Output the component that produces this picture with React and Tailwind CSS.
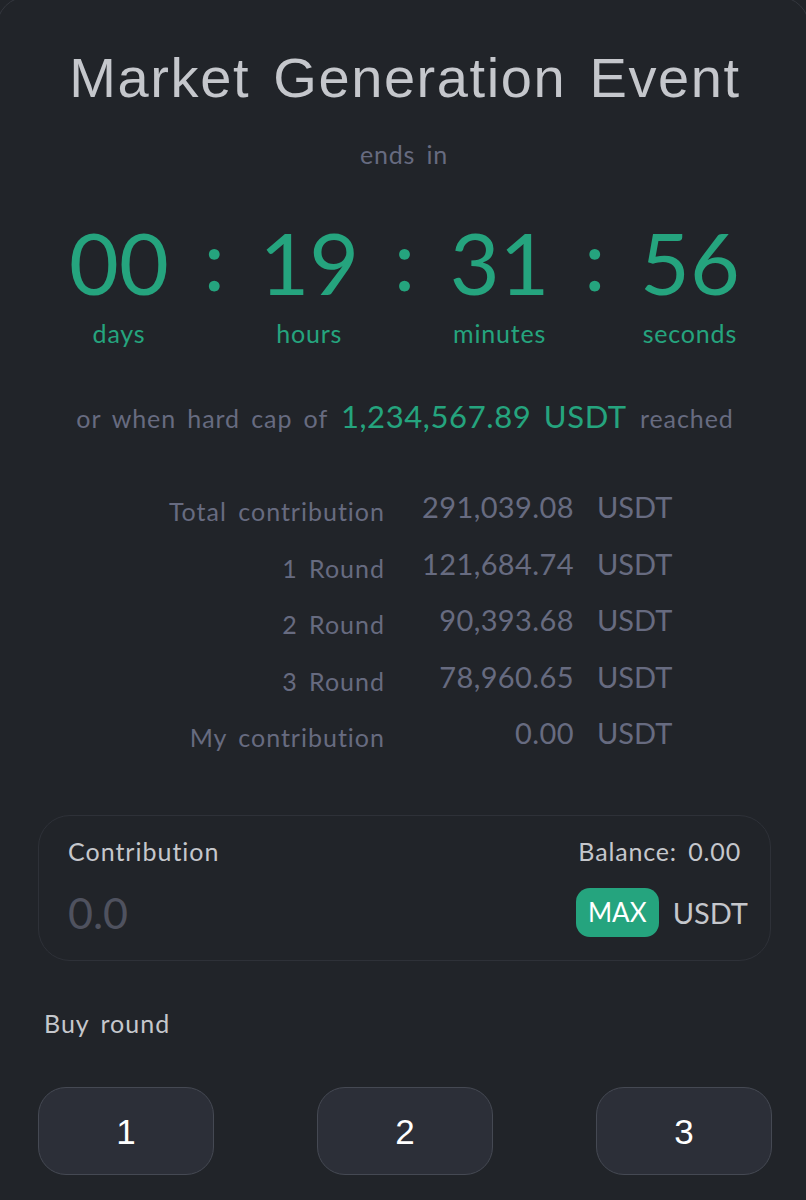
const rows = [
  ['Total contribution', '291,039.08'],
  ['1 Round', '121,684.74'],
  ['2 Round', '90,393.68'],
  ['3 Round', '78,960.65'],
  ['My contribution', '0.00'],
];

const timer = [
  ['00', 'days'],
  ['19', 'hours'],
  ['31', 'minutes'],
  ['56', 'seconds'],
];

export default function App() {
  return (
    <div className="w-[806px] h-[1200px] overflow-hidden bg-[#212429] font-['Lato',sans-serif]">
      {/* card is bigger than the page, only its top corners show */}
      <div className="-ml-[4px] -mt-[4px] w-[814px] h-[1300px] rounded-[32px] border border-[#34373e] pt-[3px] px-[3px] flex flex-col">
        <h1 className="mt-[44px] pl-[4px] text-center font-['Liberation_Sans',sans-serif] text-[56px] leading-[68px] tracking-[1.6px] [word-spacing:6px] text-[#c5c7cc]">
          Market Generation Event
        </h1>
        <p className="mt-[27px] pl-[2px] text-center text-[25px] leading-[30px] tracking-[0.8px] [word-spacing:4px] text-[#676b80]">ends in</p>

        <div className="mt-[40px] ml-[69px] flex items-start text-[#25a47e]">
          {timer.map(([num, label], i) => (
            <div key={label} className="flex items-start">
              <div className="w-[100px] flex flex-col items-center">
                <span className="text-[86px] leading-[106px]">{num}</span>
                <span className="text-[25px] leading-[30px] mt-[3px] tracking-[0.8px]">{label}</span>
              </div>
              {i < 3 && <span className="w-[90.3px] text-center text-[86px] leading-[98px]">:</span>}
            </div>
          ))}
        </div>

        <p className="mt-[48px] pl-[4px] text-center text-[25px] leading-[40px] tracking-[0.9px] [word-spacing:4px] text-[#676b80]">
          or when hard cap of <span className="text-[31px] tracking-[0.6px] text-[#25a47e] mx-[2px]">1,234,567.89 USDT</span> reached
        </p>

        <div className="mt-[53px] flex flex-col gap-[22px]">
          {rows.map(([label, value]) => (
            <div key={label} className="flex items-start h-[34.5px] text-[#676b80]">
              <span className="w-[385px] text-right text-[25px] leading-[40px] tracking-[1px] [word-spacing:4px]">{label}</span>
              <span className="w-[189px] text-right text-[29px] leading-[32px] tracking-[0.4px]">{value}</span>
              <span className="ml-[23px] text-[29px] leading-[32px]">USDT</span>
            </div>
          ))}
        </div>

        <div className="mt-[63px] ml-[38px] mr-[35px] h-[146px] rounded-[32px] border border-[#2e3138] pl-[29px] pr-[29px] flex flex-col">
          <div className="mt-[19px] flex justify-between items-center text-[25px] leading-[32px] text-[#c5c7cc]">
            <span className="tracking-[1px]">Contribution</span>
            <span className="tracking-[0.85px] [word-spacing:4px]">Balance: 0.00</span>
          </div>
          <div className="mt-[21px] flex justify-between items-center -mr-[7px]">
            <span className="text-[43px] leading-[50px] text-[#4f525f]">0.0</span>
            <div className="flex items-center gap-[14px]">
              <button className="w-[83px] h-[49px] rounded-[14px] bg-[#25a47e] text-white text-[26px]">MAX</button>
              <span className="text-[29px] text-[#c5c7cc]">USDT</span>
            </div>
          </div>
        </div>

        <p className="mt-[46px] ml-[44px] text-[25px] leading-[32px] tracking-[1px] [word-spacing:4px] text-[#c5c7cc]">Buy round</p>

        <div className="mt-[48px] ml-[38px] mr-[34px] flex justify-between">
          {['1', '2', '3'].map((n) => (
            <button key={n} className="w-[176px] h-[88px] pt-[3px] rounded-[28px] bg-[#2c2f38] border border-[#454953] font-['Liberation_Sans',sans-serif] text-[35px] text-white">{n}</button>
          ))}
        </div>
      </div>
    </div>
  );
}
